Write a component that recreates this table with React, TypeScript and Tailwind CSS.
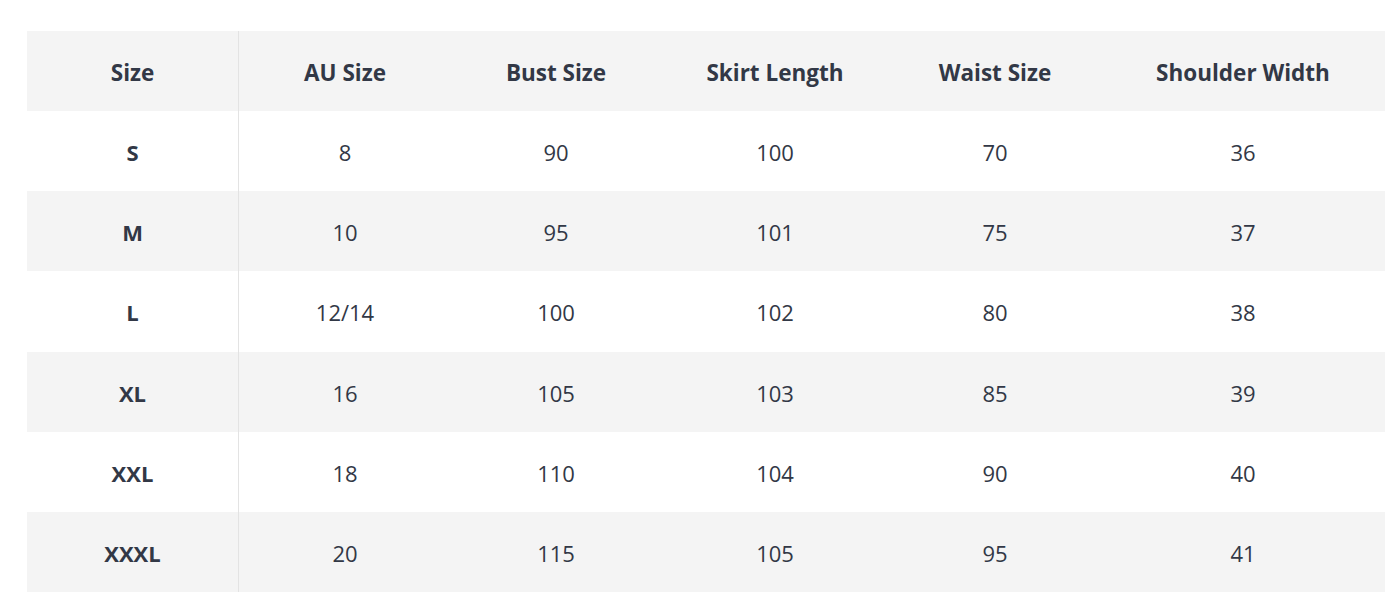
export default function App() {
  const headers = ["Size", "AU Size", "Bust Size", "Skirt Length", "Waist Size", "Shoulder Width"];
  const rows = [
    ["S", "8", "90", "100", "70", "36"],
    ["M", "10", "95", "101", "75", "37"],
    ["L", "12/14", "100", "102", "80", "38"],
    ["XL", "16", "105", "103", "85", "39"],
    ["XXL", "18", "110", "104", "90", "40"],
    ["XXXL", "20", "115", "105", "95", "41"],
  ];

  return (
    <div className="min-h-screen bg-white pt-[31px] pl-[27px] font-['Open_Sans',sans-serif] text-[#323846]">
      <div className="w-[1358px]">
        {/* header */}
        <div className="grid grid-cols-[212px_212px_210px_228px_212px_284px] h-20 bg-[#f4f4f4] text-[22.5px] font-bold">
          {headers.map((h, i) => (
            <div
              key={h}
              className={`flex items-center justify-center pt-[3px] ${i === 0 ? "border-r border-[#e3e3e3]" : ""}`}
            >
              {h}
            </div>
          ))}
        </div>

        {rows.map((row, r) => (
          <div
            key={row[0]}
            className={`grid grid-cols-[212px_212px_210px_228px_212px_284px] h-[80.2px] text-[22px] ${r % 2 === 1 ? "bg-[#f4f4f4]" : "bg-white"}`}
          >
            {row.map((cell, i) => (
              <div
                key={i}
                className={`flex items-center justify-center pt-[3px] ${i === 0 ? "font-bold border-r border-[#e3e3e3]" : ""}`}
              >
                {cell}
              </div>
            ))}
          </div>
        ))}
      </div>
    </div>
  );
}
